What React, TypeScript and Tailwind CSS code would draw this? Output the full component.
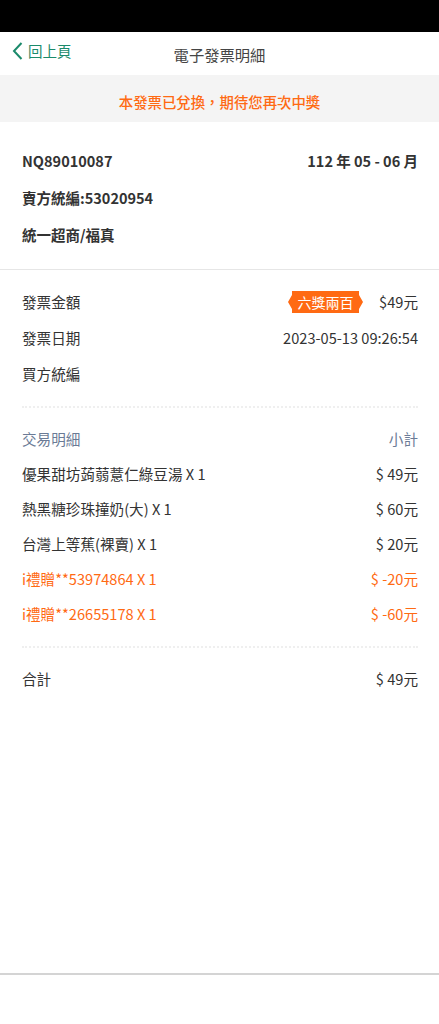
import React from "react";

const font = { fontFamily: '"Noto Sans CJK TC", "Noto Sans", sans-serif' };

function Row({ left, right, className = "" }: { left: React.ReactNode; right?: React.ReactNode; className?: string }) {
  return (
    <div className={`flex items-center justify-between ${className}`}>
      <span>{left}</span>
      {right !== undefined && <span>{right}</span>}
    </div>
  );
}

function PrizeBadge() {
  return (
    <span className="relative inline-flex h-[22px] w-[75px] items-center justify-center">
      <svg className="absolute inset-0" width="75" height="22" viewBox="0 0 75 22">
        <polygon
          points="4,0 71,0 71,4 75,11 71,18 71,22 4,22 4,18 0,11 4,4"
          fill="#ff6a13"
        />
      </svg>
      <span className="relative text-[14px] leading-none text-white">六獎兩百</span>
    </span>
  );
}

const items = [
  { name: "優果甜坊蒟蒻薏仁綠豆湯 X 1", price: "$ 49元", gift: false },
  { name: "熱黑糖珍珠撞奶(大) X 1", price: "$ 60元", gift: false },
  { name: "台灣上等蕉(裸賣) X 1", price: "$ 20元", gift: false },
  { name: "i禮贈**53974864 X 1", price: "$ -20元", gift: true },
  { name: "i禮贈**26655178 X 1", price: "$ -60元", gift: true },
];

export default function App() {
  return (
    <div className="flex min-h-screen flex-col bg-white text-[#333]" style={font}>
      {/* status bar */}
      <div className="h-[32px] bg-black" />

      {/* header */}
      <div className="relative flex h-[43px] items-center justify-center">
        <div className="absolute left-[12px] top-[8px] flex items-center gap-[5px] text-[#1b8a6b]">
          <svg width="11" height="18" viewBox="0 0 11 18">
            <polyline points="9.5,1 2,9 9.5,17" fill="none" stroke="#1b8a6b" strokeWidth="2" />
          </svg>
          <span className="text-[14.5px]">回上頁</span>
        </div>
        <span className="pt-[2px] text-[15.3px] text-[#444]">電子發票明細</span>
      </div>

      {/* notice */}
      <div className="flex h-[47px] items-center justify-center bg-[#f4f4f4] pt-[7px]">
        <span className="text-[14.4px] font-medium text-[#ff6a13]">本發票已兌換，期待您再次中獎</span>
      </div>

      {/* seller */}
      <div className="border-b border-[#e6e6e6] pb-[16px] pl-[22px] pr-[21px] pt-[20px] text-[14.5px] font-bold">
        <Row className="h-[37px]" left="NQ89010087" right="112 年 05 - 06 月" />
        <Row className="h-[37px]" left="賣方統編:53020954" />
        <Row className="h-[37px]" left="統一超商/福真" />
      </div>

      {/* invoice */}
      <div className="pl-[22px] pr-[21px] pt-[14px] text-[14.6px]">
        <div className="flex h-[36px] items-center justify-between">
          <span>發票金額</span>
          <span className="flex items-center gap-[16px]">
            <PrizeBadge />
            <span>$49元</span>
          </span>
        </div>
        <Row className="h-[36px]" left="發票日期" right="2023-05-13 09:26:54" />
        <Row className="h-[36px]" left="買方統編" />

        <div className="mt-[14px] border-t-2 border-dotted border-[#efefef]" />

        <div className="pt-[13px]">
          <Row className="h-[35px] text-[#6b7b96]" left="交易明細" right="小計" />
          {items.map((it) => (
            <Row
              key={it.name}
              className={`h-[35px] ${it.gift ? "text-[#ff6a13]" : ""}`}
              left={it.name}
              right={it.price}
            />
          ))}
        </div>

        <div className="mt-[15px] border-t-2 border-dotted border-[#efefef]" />

        <div className="pt-[13px]">
          <Row className="h-[36px]" left="合計" right="$ 49元" />
        </div>
      </div>

      <div className="flex-1" />
      <div className="h-[51px] border-t-2 border-[#d4d4d4]" />
    </div>
  );
}
